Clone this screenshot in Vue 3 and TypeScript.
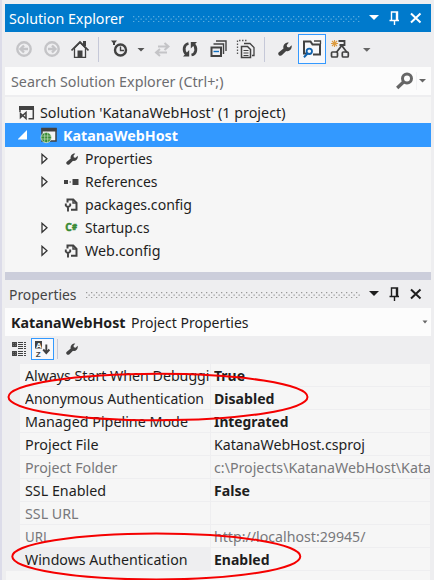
<script setup lang="ts">
interface TreeItem { label: string; icon: 'wrench' | 'refs' | 'config' | 'cs'; width: number; open: boolean }
interface PropRow { name: string; nameWidth: number; value: string; valueWidth: number; bold?: boolean; muted?: boolean; active?: boolean }

const items: TreeItem[] = [
  { label: 'Properties', icon: 'wrench', width: 67.5, open: true },
  { label: 'References', icon: 'refs', width: 72.5, open: true },
  { label: 'packages.config', icon: 'config', width: 107, open: false },
  { label: 'Startup.cs', icon: 'cs', width: 64.5, open: true },
  { label: 'Web.config', icon: 'config', width: 75.5, open: true },
]

const rows: PropRow[] = [
  { name: 'Always Start When Debuggi', nameWidth: 184.5, value: 'True', valueWidth: 31, bold: true },
  { name: 'Anonymous Authentication', nameWidth: 179, value: 'Disabled', valueWidth: 60.5, bold: true },
  { name: 'Managed Pipeline Mode', nameWidth: 163, value: 'Integrated', valueWidth: 74.5, bold: true },
  { name: 'Project File', nameWidth: 73.5, value: 'KatanaWebHost.csproj', valueWidth: 151 },
  { name: 'Project Folder', nameWidth: 92.5, value: 'c:\\Projects\\KatanaWebHost\\Kata', valueWidth: 217, muted: true },
  { name: 'SSL Enabled', nameWidth: 81, value: 'False', valueWidth: 36, bold: true },
  { name: 'SSL URL', nameWidth: 53.5, value: '', valueWidth: 0, muted: true },
  { name: 'URL', nameWidth: 25, value: 'http://localhost:29945/', valueWidth: 151.5, muted: true },
  { name: 'Windows Authentication', nameWidth: 162.5, value: 'Enabled', valueWidth: 55.5, bold: true, active: true },
]

// Condenses a label horizontally to its design width.
const vFit = {
  mounted(el: HTMLElement, binding: { value: number }) {
    const natural = el.getBoundingClientRect().width
    if (!natural || !binding.value) return
    el.style.transform = `scaleX(${binding.value / natural})`
    el.style.marginRight = `${binding.value - natural}px`
  },
}
</script>

<template>
  <div class="window">
    <section class="explorer">
      <header class="title active">
        <span v-fit="115" class="t">Solution Explorer</span>
        <svg class="grip wide" width="227" height="7">
          <defs>
            <pattern id="gripBlue" width="5" height="6" patternUnits="userSpaceOnUse">
              <path d="M0 0h1.300v1.300H0zM2.500 2.500h1.300v1.300H2.500zM0 5h1.300v1.300H0z" fill="#59ace0" />
            </pattern>
          </defs>
          <rect width="227" height="6" fill="url(#gripBlue)" />
        </svg>
        <svg class="controls" viewBox="368 10 56 16" width="56" height="16">
          <path d="M369 15h10l-5 5z" fill="#fff" />
          <path d="M391.500 20V12h6v8M389.500 20.500h9.500M394.500 20v5M396.500 12v8" fill="none" stroke="#fff" stroke-width="1.400" />
          <path d="M411 13.500l9.500 9M420.500 13.500l-9.500 9" stroke="#fff" stroke-width="2" />
        </svg>
      </header>

      <div class="toolbar">
        <svg class="i-nav" viewBox="16 40 44 18" width="44" height="18" fill="none" stroke="#c4c4c7" stroke-width="2.400">
          <circle cx="24" cy="49" r="6.700" /><path d="M28 49h-7M24 45.500L20.500 49l3.500 3.500" />
          <circle cx="52" cy="49" r="6.700" /><path d="M48 49h7M52 45.500l3.500 3.500-3.500 3.500" />
        </svg>
        <svg class="i-home" viewBox="71 39 18 20" width="18" height="20">
          <path d="M83 41h3v5h-3z" fill="#424242" />
          <path d="M74.500 48v9.300h11V48L80 42.500z" fill="#f4f4f6" stroke="#424242" stroke-width="1.300" />
          <path d="M71.500 50.500L80 42l8.500 8.500" fill="none" stroke="#424242" stroke-width="1.700" />
          <path d="M77.500 50.500h5V58h-5z" fill="#424242" />
        </svg>
        <i class="sep s1"></i>
        <svg class="i-clock" viewBox="110 39 35 18" width="35" height="18">
          <path d="M111 39.500h6l-2 2.500v2h-2v-2z" fill="#424242" />
          <circle cx="120.500" cy="49" r="5.500" fill="none" stroke="#424242" stroke-width="2.400" />
          <path d="M120.500 45.500V49.500H124" fill="none" stroke="#424242" stroke-width="1.400" />
          <path d="M137.500 47h7l-3.500 3.500z" fill="#555" />
        </svg>
        <svg class="i-sync" viewBox="154 41 16 15" width="16" height="15" fill="none" stroke="#c4c4c7" stroke-width="2">
          <path d="M158 45.500h10M164.500 42l4 3.500-4 3.500M167 51.500h-10M160 48l-4 3.500 4 3.500" />
        </svg>
        <svg class="i-refresh" viewBox="182 41 16 17" width="16" height="17" fill="none" stroke="#424242" stroke-width="2.800">
          <path d="M188.500 43.500C183.500 44.500 182.800 51 186.500 54.500M191.500 55C196.500 54 197.200 47.500 193.500 44" />
          <path d="M183 56.500h6.200V50zM197 42h-6.200v6.500z" fill="#424242" stroke="none" />
        </svg>
        <svg class="i-collapse" viewBox="210 40 17 18" width="17" height="18" fill="none" stroke="#424242" stroke-width="1.400">
          <path d="M216 41h10v10M213.500 44h10v10" />
          <path d="M211.500 47.500h9.500v8.500h-9.500z" stroke-width="2" />
          <path d="M213.500 51.500h5.500" stroke="#1070c0" />
        </svg>
        <svg class="i-files" viewBox="236 39 19 20" width="19" height="20" fill="none" stroke="#424242">
          <path d="M237.500 54V40.500h9" stroke="#555" stroke-width="1.300" stroke-dasharray="1.500 1.500" />
          <path d="M244 43.500h6l4 4v8h-2" stroke-width="1.300" />
          <path d="M241.500 46.500h6l3 3v8h-9z" stroke-width="1.500" /><path d="M243.500 50.500h5M243.500 53h5M243.500 55.500h5" />
        </svg>
        <i class="sep s2"></i>
        <svg class="i-wrench" viewBox="0 0 14 14" width="14" height="14">
          <path d="M.6 10.600L5.500 6.500C4.500 3.300 7.500.0 10.800.6L8.700 3.200l.5 1.900 2 .4 2.400-2.200c.9 3.700-2.200 6.700-5.400 5.700L3.800 13.300C2 14.800-.8 12.500.6 10.600z" fill="#424242" />
        </svg>
        <span class="pressed">
          <svg viewBox="303 40 19 18" width="19" height="18" fill="none">
            <path d="M307 53.500h-3V41.500h6.500l2 3h7.500v10h-7" stroke="#424242" stroke-width="2" />
            <path d="M314 41h6.500v3" stroke="#424242" stroke-width="1.300" />
            <circle cx="309.300" cy="51.300" r="2.700" stroke="#1263ae" stroke-width="1.800" /><path d="M307.500 53.500l-3.500 3.700" stroke="#1263ae" stroke-width="2" />
          </svg>
        </span>
        <svg class="i-graph" viewBox="330 38 41 20" width="41" height="20" fill="none" stroke="#424242">
          <path d="M334.500 39v7M331 42.500h7M332 40l5 5M337 40l-5 5" stroke="#dc9c42" stroke-width="1.100" />
          <path d="M338.500 40h6v4h-5M341.800 44.500l-5.500 7M341.800 44.500l5.200 7" stroke-width="1.800" />
          <rect x="331.500" y="51" width="6" height="5" rx="1" stroke-width="1.700" /><rect x="342.300" y="51" width="6" height="5" rx="1" stroke-width="1.700" />
          <path d="M363 47h7.500l-3.700 3.800z" fill="#666" stroke="none" />
        </svg>
      </div>

      <div class="search">
        <span v-fit="212.5" class="t">Search Solution Explorer (Ctrl+;)</span>
        <svg viewBox="396 72 32 18" width="32" height="18">
          <path d="M416 67h1v28h-1z" fill="#f2f2f4" />
          <circle cx="407" cy="78.500" r="4.500" fill="none" stroke="#666" stroke-width="3" />
          <path d="M403.500 82l-6.300 6" stroke="#666" stroke-width="3.300" /><path d="M419 79h7l-3.500 3.600z" fill="#666" />
        </svg>
      </div>

      <div class="tree">
        <div class="node solution">
          <svg viewBox="19 104 16 16" width="16" height="16" fill="none">
            <path d="M19 105h15v4H19z" fill="#424242" /><path d="M20 106v5M33.300 107v10.800H28.500" stroke="#424242" stroke-width="1.500" />
            <path d="M20.500 112.500l5.500 5v-6l-5.500 5z" stroke="#424242" stroke-width="1.500" />
          </svg>
          <span v-fit="245.5" class="t">Solution 'KatanaWebHost' (1 project)</span>
        </div>
        <div class="node selected">
          <svg viewBox="18 127 40 18" width="40" height="18" fill="none">
            <path d="M27 131v9.500h-9.500z" fill="#fff" />
            <path d="M42 129.500h14v12.500H42z" fill="#f4f4f4" stroke="#424242" stroke-width="1.500" /><path d="M41.500 129h15v3.500h-15z" fill="#424242" />
            <circle cx="46.200" cy="138.500" r="5.200" fill="#388a34" stroke="#e9f3e8" stroke-width=".7" />
            <path d="M41.500 137h9.500M41.500 140h9.500M44.700 134v9M47.700 134v9" stroke="#c2dec0" stroke-width=".7" />
          </svg>
          <span v-fit="115" class="t">KatanaWebHost</span>
        </div>
        <div v-for="item in items" :key="item.label" class="node child">
          <svg class="arrow" width="8" height="12" viewBox="0 0 8 12">
            <path v-if="item.open" d="M1 1.300v9L6 5.800z" fill="#fcfcfc" stroke="#333" stroke-width="1.300" />
          </svg>
          <svg class="kind" width="15" height="14" viewBox="0 0 15 14" fill="none">
            <path v-if="item.icon === 'wrench'" transform="translate(2 1) scale(.86)" d="M.6 10.600L5.500 6.500C4.500 3.300 7.500.0 10.800.6L8.700 3.200l.5 1.900 2 .4 2.400-2.200c.9 3.700-2.200 6.700-5.400 5.700L3.800 13.300C2 14.800-.8 12.500.6 10.600z" fill="#424242" />
            <path v-else-if="item.icon === 'refs'" d="M0 5h4v4H0zM5.500 6.500h1.500v1H5.500zM8.500 4h6v6h-6z" fill="#424242" />
            <g v-else-if="item.icon === 'config'" stroke="#424242" stroke-width="2">
              <path d="M3.500 4.500V1.500h5.700l3.300 3.300v7H7" /><path d="M9 1.500v3.500h3.500" stroke-width="1.400" />
              <path d="M1.800 5.500v2l2.100 1.700L6.200 7.500v-2M4 9V13.500" stroke-width="1.900" />
            </g>
            <g v-else class="cs">
              <text x="1.300" y="10.300" textLength="6.500" lengthAdjust="spacingAndGlyphs">C</text>
              <text class="hash" x="8" y="8.600" textLength="5" lengthAdjust="spacingAndGlyphs">#</text>
            </g>
          </svg>
          <span v-fit="item.width" class="t">{{ item.label }}</span>
        </div>
      </div>
    </section>

    <section class="properties">
      <header class="title">
        <span v-fit="67.5" class="t">Properties</span>
        <svg class="grip" width="274" height="7">
          <defs>
            <pattern id="gripGray" width="5" height="6" patternUnits="userSpaceOnUse">
              <path d="M0 0h1.300v1.300H0zM2.500 2.500h1.300v1.300H2.500zM0 5h1.300v1.300H0z" fill="#999" />
            </pattern>
          </defs>
          <rect width="274" height="6" fill="url(#gripGray)" />
        </svg>
        <svg class="controls" viewBox="368 10 56 16" width="56" height="16">
          <path d="M369 15h10l-5 5z" fill="#1e1e1e" />
          <path d="M391.500 20V12h6v8M389.500 20.500h9.500M394.500 20v5M396.500 12v8" fill="none" stroke="#1e1e1e" stroke-width="1.400" />
          <path d="M411 13.500l9.500 9M420.500 13.500l-9.500 9" stroke="#1e1e1e" stroke-width="2" />
        </svg>
      </header>

      <div class="object">
        <b v-fit="114.5" class="t">KatanaWebHost</b>
        <span v-fit="117.5" class="t">Project Properties</span>
        <svg width="6" height="4" viewBox="0 0 6 4"><path d="M.5 .5h5L3 3.500z" fill="#666" /></svg>
      </div>

      <div class="proptools">
        <svg viewBox="12 341 15 16" width="15" height="16" fill="none" stroke="#424242">
          <path d="M12.700 342.700h3.600v3.600h-3.600zM12.700 351.700h3.600v3.600h-3.600zM14.500 343v3M13 344.500h3M14.500 352v3M13 353.500h3" stroke-width="1.300" />
          <path d="M18 342.500h8M18 344.500h8M18 346.500h8M18 348.500h8M18 351.500h8M18 353.500h8M18 355.500h8" stroke-dasharray="5 1" />
        </svg>
        <span class="sorted">
          <svg viewBox="34 341 17 16" width="17" height="16">
            <path d="M35 341h7v7.500h-7z" fill="#424242" />
            <text class="glyph light" x="35.900" y="347.700">A</text>
            <text class="glyph" x="35.700" y="356.500">Z</text>
            <path d="M46.300 344.500v8M43.200 349.500l3.100 3.500 3.100-3.500" fill="none" stroke="#424242" stroke-width="1.900" />
          </svg>
        </span>
        <i class="sep s3"></i>
        <svg class="tool" viewBox="0 0 14 14" width="12" height="12">
          <path d="M.6 10.600L5.500 6.500C4.500 3.300 7.500.0 10.800.6L8.700 3.200l.5 1.900 2 .4 2.400-2.200c.9 3.700-2.200 6.700-5.400 5.700L3.800 13.300C2 14.800-.8 12.500.6 10.600z" fill="#424242" />
        </svg>
      </div>

      <div class="grid">
        <div v-for="row in rows" :key="row.name" class="row" :class="{ muted: row.muted, bold: row.bold, current: row.active }">
          <div class="name"><span v-fit="row.nameWidth" class="t">{{ row.name }}</span></div>
          <div class="value"><span v-fit="row.valueWidth" class="t">{{ row.value }}</span></div>
        </div>
      </div>
      <div class="description"></div>
    </section>

    <svg class="marks" width="434" height="580" fill="none" stroke="#f50000" stroke-width="2">
      <ellipse cx="158" cy="397" rx="149.500" ry="23.300" />
      <ellipse cx="156.300" cy="556.500" rx="144" ry="23" />
    </svg>
  </div>
</template>

<style>
body { margin: 0; background: #eeeef2; overflow: hidden; }
</style>

<style scoped>
.window {
  position: relative; box-sizing: border-box; width: 434px; height: 580px; padding: 4px 3px 0 3px;
  border-left: 2px solid #dcdce9; background: #eeeef0; overflow: hidden;
  font-family: "Noto Sans", "Open Sans", sans-serif; font-size: 15px; line-height: 23px; color: #1e1e1e;
}
svg { display: block; flex: none; }
.t { display: inline-block; flex: none; white-space: pre; transform-origin: 0 50%; }
.title { display: flex; align-items: center; height: 28px; padding-left: 4px; color: #444; }
.title.active { background: #007acc; color: #fff; }
.grip { margin: 2px 0 0 9px; }
.controls { margin-left: auto; margin-right: 7px; }
.toolbar { display: flex; align-items: center; height: 35px; padding: 0 0 1px 11px; box-sizing: border-box; }
.i-home { margin-left: 11px; }
.sep { width: 1px; height: 25px; background: #c5c8d8; flex: none; }
.s1 { margin-left: 9px; }
.i-clock { margin-left: 11px; }
.i-sync { margin-left: 9px; }
.i-refresh { margin-left: 12px; }
.i-collapse { margin-left: 12px; }
.i-files { margin-left: 9px; }
.s2 { margin-left: 9px; }
.i-wrench { margin-left: 13px; }
.pressed { display: flex; align-items: center; justify-content: center; box-sizing: border-box; width: 28px; height: 30px; margin-left: 6px; border: 1px solid #3399ff; background: #f8f8fa; }
.i-graph { margin-left: 4px; }
.search { display: flex; align-items: center; justify-content: space-between; height: 28px; padding: 0 3px 0 6px; background: #fcfcfc; color: #6d6d70; }
.tree { box-sizing: border-box; height: 175px; margin-top: 2px; padding-top: 3px; background: #f6f6f6; }
.node { display: flex; align-items: center; height: 23px; }
.solution { box-sizing: border-box; padding: 2px 0 0 14px; height: 23px; }
.solution .t { margin-left: 5px; }
.selected { height: 24px; padding-left: 13px; background: #3399ff; color: #fff; font-weight: 700; }
.selected .t { margin-left: 5px; }
.child { padding-left: 36px; }
.kind { margin-left: 15px; }
.child .t { margin-left: 6px; }
.cs { font: 700 10.500px "Open Sans", sans-serif; fill: #388a34; stroke: #388a34; stroke-width: .5px; }
.hash { font-size: 8px; }
.properties { border-top: 8px solid #cccedb; }
.object { display: flex; align-items: center; height: 28px; padding: 0 3px 0 6px; background: #fcfcfc; }
.object span { margin-left: 5px; }
.object svg { margin-left: auto; }
.proptools { display: flex; align-items: center; height: 27px; padding: 0 0 1px 7px; box-sizing: border-box; }
.sorted { display: flex; align-items: center; justify-content: center; box-sizing: border-box; width: 23px; height: 22px; margin-left: 4px; border: 1px solid #3399ff; background: #f8f8fa; }
.glyph { font: 700 8px "Liberation Sans", sans-serif; fill: #424242; }
.light { fill: #fff; }
.s3 { height: 20px; margin-left: 3px; }
.tool { margin-left: 8px; }
.grid { margin: 1px 1px 0 15px; }
.row { display: grid; grid-template-columns: 190px 1fr; column-gap: 1px; height: 22px; margin-bottom: 1px; line-height: 23px; }
.name, .value { overflow: hidden; background: #f6f6f6; }
.name { padding-left: 5px; }
.value { padding-left: 3px; }
.muted { color: #78787b; }
.bold .value { font-weight: 700; }
.current .name { background: #eeeef0; }
.description { height: 12px; margin: 0 1px; background: #f6f6f6; }
.marks { position: absolute; left: -2px; top: 0; pointer-events: none; }
</style>
